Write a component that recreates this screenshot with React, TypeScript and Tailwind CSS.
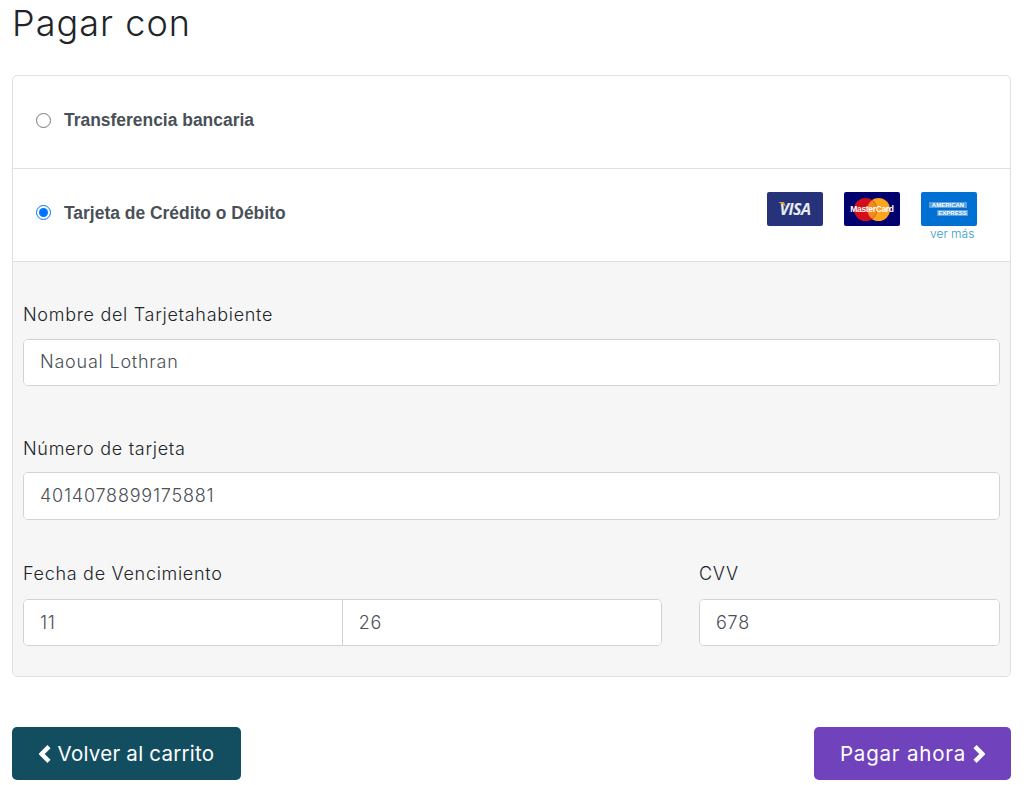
const labelFont = "font-['Inter','Noto_Sans',sans-serif]";
const labelClass = `block text-[18px] font-light leading-[26px] tracking-[0.7px] text-[#212529] ${labelFont}`;
const inputClass = `h-full w-full min-w-0 bg-white px-4 text-[18px] font-light tracking-[0.78px] text-[#495057] outline-none ${labelFont}`;

function Chevron({ right }: { right?: boolean }) {
  return (
    <svg width="13" height="18" viewBox="0 0 13 18" fill="none" stroke="currentColor" strokeWidth="4.4">
      <path d={right ? 'M3 1.6 L10.4 9 L3 16.4' : 'M10 1.6 L2.6 9 L10 16.4'} />
    </svg>
  );
}

function Field({ label, value, gap, height }: { label: string; value: string; gap: string; height: string }) {
  return (
    <div>
      <label className={labelClass}>{label}</label>
      <div className={`${gap} ${height} overflow-hidden rounded-[5px] border border-[#ced4da]`}>
        <input className={`${inputClass} pb-[2px]`} defaultValue={value} />
      </div>
    </div>
  );
}

function VisaCard() {
  return (
    <div className="relative flex h-[34px] w-[56px] items-center justify-center rounded-[2px] bg-[#26337a]">
      <span className="font-['Open_Sans',sans-serif] text-[16px] font-bold italic leading-none tracking-[-0.5px] text-[#e8eaf4]">VISA</span>
      <svg className="absolute left-[11px] top-[10px]" width="8" height="6" viewBox="0 0 8 6">
        <path d="M0 0 L6 0 L8 5 Q5 1.5 0 0 Z" fill="#e0a030" />
      </svg>
    </div>
  );
}

function MasterCardLogo() {
  return (
    <div className="relative flex h-[34px] w-[56px] items-center justify-center rounded-[2px] bg-[#00006f]">
      <svg width="36" height="23" viewBox="0 0 36 23">
        <circle cx="24.5" cy="11.5" r="11.5" fill="#fca41c" />
        <circle cx="11.5" cy="11.5" r="11.5" fill="#d40f1a" />
        <path d="M18 2.2 A11.5 11.5 0 0 1 18 20.8 A11.5 11.5 0 0 1 18 2.2 Z" fill="#f08a1c" />
      </svg>
      <span className="absolute inset-0 flex items-center justify-center font-['Liberation_Sans',sans-serif] text-[8.5px] font-bold tracking-[-0.35px] text-white">
        MasterCard
      </span>
    </div>
  );
}

function AmexCard() {
  return (
    <div className="flex h-[34px] w-[56px] flex-col items-center justify-center gap-[2px] rounded-[2px] bg-[#0070d2] font-['Liberation_Sans',sans-serif] text-[6px] font-bold leading-[6px] text-white">
      <span className="mr-[2px] w-[38px] bg-[#5a9fe0] text-center">AMERICAN</span>
      <span className="ml-[7px] w-[31px] bg-[#5a9fe0] text-center">EXPRESS</span>
    </div>
  );
}

export default function App() {
  return (
    <div className="h-[785px] w-[1036px] overflow-hidden bg-white pl-3">
      <div className="w-[999px]">
        <h1 className={`h-[75px] pt-[1px] text-[36px] font-light leading-[44px] tracking-[1.05px] text-[#212529] ${labelFont}`}>Pagar con</h1>

        <div className="overflow-hidden rounded-[5px] border border-[#dfdfdf]">
          <div className="flex h-[93px] items-center border-b border-[#dfdfdf] pb-[4px] pl-[23px]">
            <input type="radio" name="pay" readOnly className="m-0 h-[15px] w-[15px]" />
            <span className="ml-[13px] mt-[1px] font-['Liberation_Sans',sans-serif] text-[17.45px] font-bold text-[#495057]">Transferencia bancaria</span>
          </div>

          <div className="flex h-[93px] items-center justify-between border-b border-[#dfdfdf] pb-[4px] pl-[23px] pr-[33px]">
            <div className="flex items-center">
              <input type="radio" name="pay" defaultChecked className="m-0 h-[15px] w-[15px]" />
              <span className="ml-[13px] mt-[1px] font-['Liberation_Sans',sans-serif] text-[17.45px] font-bold text-[#495057]">Tarjeta de Crédito o Débito</span>
            </div>
            <div className="flex gap-[21px] self-start pt-[23px]">
              <VisaCard />
              <MasterCardLogo />
              <div>
                <AmexCard />
                <div className={`mt-[1px] pl-[9px] text-[12px] font-light leading-[14px] text-[#2f9ccb] ${labelFont}`}>ver más</div>
              </div>
            </div>
          </div>

          <div className="flex h-[414px] flex-col bg-[#f6f6f6] px-[10px] pt-[40px]">
            <Field label="Nombre del Tarjetahabiente" value="Naoual Lothran" gap="mt-[11px]" height="h-[47px]" />
            <div className="mt-[50px]">
              <Field label="Número de tarjeta" value="4014078899175881" gap="mt-[10px]" height="h-[48px]" />
            </div>
            <div className="mt-[41px] flex gap-[37px]">
              <div className="w-[639px]">
                <label className={labelClass}>Fecha de Vencimiento</label>
                <div className="mt-[12px] flex h-[47px] overflow-hidden rounded-[5px] border border-[#ced4da]">
                  <input className={`${inputClass} border-r border-[#ced4da]`} defaultValue="11" />
                  <input className={inputClass} defaultValue="26" />
                </div>
              </div>
              <div className="w-[301px]">
                <label className={labelClass}>CVV</label>
                <div className="mt-[12px] h-[47px] overflow-hidden rounded-[5px] border border-[#ced4da]">
                  <input className={inputClass} defaultValue="678" />
                </div>
              </div>
            </div>
          </div>
        </div>

        <div className="mt-[50px] flex justify-between">
          <button className={`flex h-[53px] w-[229px] items-center justify-center gap-[6px] rounded-[5px] bg-[#124e60] pt-[1px] text-[20.5px] tracking-[0.25px] text-white ${labelFont}`}>
            <Chevron />
            Volver al carrito
          </button>
          <button className={`flex h-[53px] w-[197px] items-center justify-center gap-[6px] rounded-[5px] bg-[#7043bd] pt-[1px] text-[20.5px] tracking-[0.8px] text-white ${labelFont}`}>
            Pagar ahora
            <Chevron right />
          </button>
        </div>
      </div>
    </div>
  );
}
